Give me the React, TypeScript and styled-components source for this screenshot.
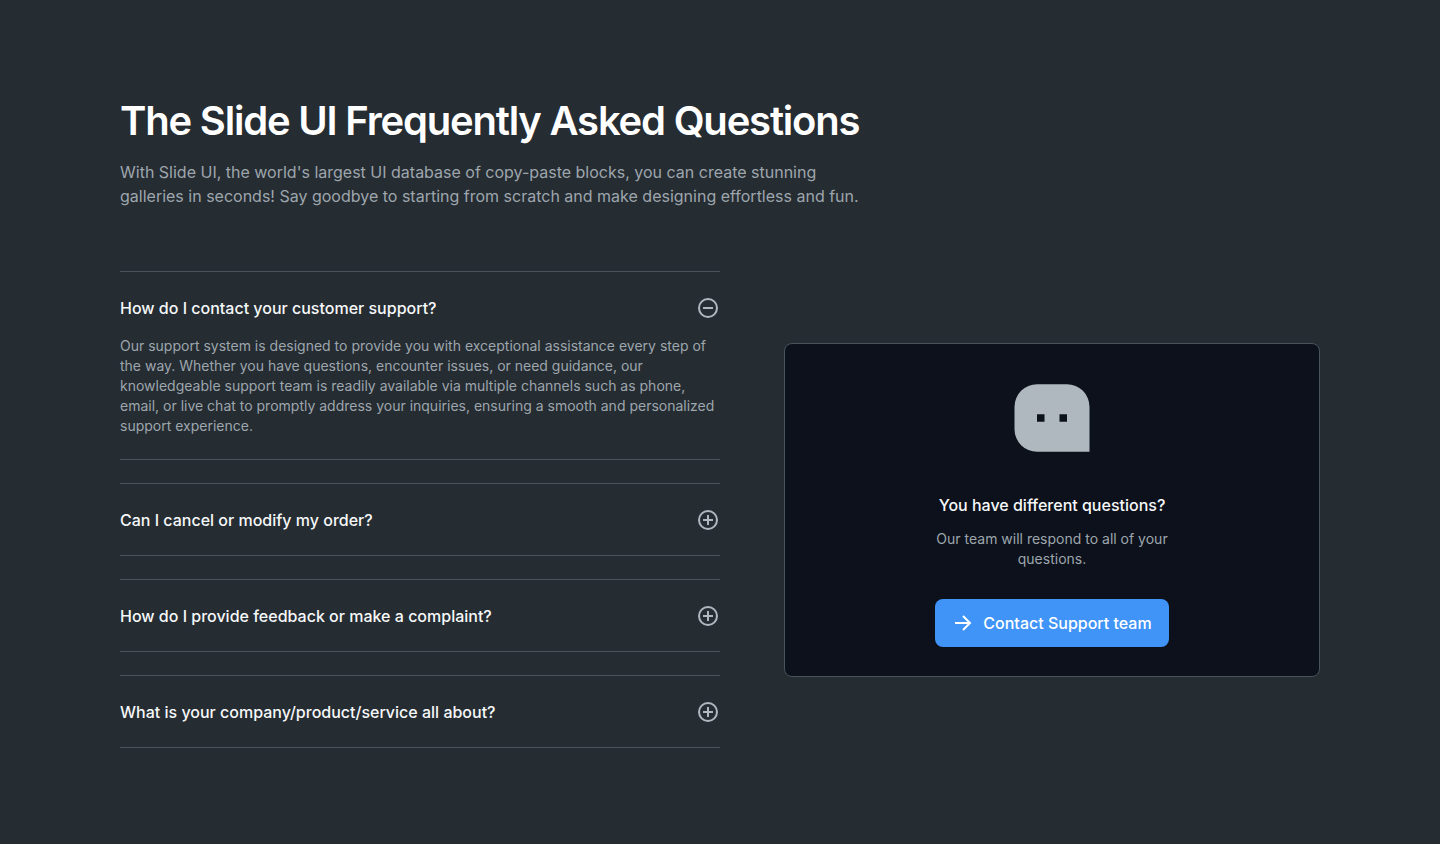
import React, { useState } from "react";
import styled, { createGlobalStyle } from "styled-components";

const color = {
  page: "#252c32",
  card: "#0c111b",
  line: "#48535b",
  text: "#f6f8f9",
  muted: "#9ea6ad",
  icon: "#b0b8bf",
  primary: "#4094f7",
};

const GlobalStyle = createGlobalStyle`
  *, *::before, *::after { box-sizing: border-box; }
  body {
    margin: 0;
    background: ${color.page};
    font-family: Inter, "Liberation Sans", sans-serif;
    -webkit-font-smoothing: antialiased;
  }
  h1, h2, h3, p { margin: 0; }
`;

const Section = styled.main`
  max-width: 1440px;
  margin: 0 auto;
  padding: 96px 120px;

  @media (max-width: 900px) {
    padding: 48px 24px;
  }
`;

const Header = styled.header`
  display: flex;
  flex-direction: column;
  gap: 15px;
  max-width: 760px;
  margin-bottom: 63px;
`;

const Title = styled.h1`
  color: #fff;
  font-size: 40px;
  line-height: 49px;
  font-weight: 600;
  letter-spacing: -0.03em;
`;

const Intro = styled.p`
  color: ${color.muted};
  font-size: 16px;
  line-height: 24px;
`;

const Content = styled.div`
  display: grid;
  grid-template-columns: minmax(0, 600fr) minmax(0, 536fr);
  gap: 64px;
  align-items: center;

  @media (max-width: 900px) {
    grid-template-columns: minmax(0, 1fr);
  }
`;

const Questions = styled.div`
  display: flex;
  flex-direction: column;
  gap: 23px;
`;

const Item = styled.section`
  border-top: 1px solid ${color.line};
  border-bottom: 1px solid ${color.line};
  padding: 24px 0 23px;
`;

const Question = styled.button`
  display: flex;
  align-items: center;
  justify-content: space-between;
  width: 100%;
  padding: 0;
  border: 0;
  background: none;
  color: ${color.text};
  font: 500 16px/24px Inter, "Liberation Sans", sans-serif;
  text-align: left;
  cursor: pointer;
`;

const Answer = styled.p`
  margin-top: 16px;
  color: ${color.muted};
  font-size: 14px;
  line-height: 20px;
`;

const ItemIcon = styled.svg`
  flex: none;
  width: 24px;
  height: 24px;
  color: ${color.icon};
`;

const Card = styled.aside`
  display: flex;
  flex-direction: column;
  align-items: center;
  padding: 40px 24px 29px;
  border: 1px solid ${color.line};
  border-radius: 8px;
  background: ${color.card};
  text-align: center;
`;

const Face = styled.svg`
  width: 76px;
  height: 68px;
  margin-bottom: 41px;
`;

const CardTitle = styled.h2`
  color: ${color.text};
  font-size: 16px;
  line-height: 24px;
  font-weight: 500;
`;

const CardText = styled.p`
  max-width: 240px;
  margin: 12px 0 30px;
  color: ${color.muted};
  font-size: 14px;
  line-height: 20px;
`;

const Contact = styled.button`
  display: flex;
  align-items: center;
  gap: 8px;
  height: 48px;
  padding: 0 17px 0 16px;
  border: 0;
  border-radius: 8px;
  background: ${color.primary};
  color: #fff;
  font: 500 16px/24px Inter, "Liberation Sans", sans-serif;
  cursor: pointer;
`;

const faqs = [
  {
    question: "How do I contact your customer support?",
    answer:
      "Our support system is designed to provide you with exceptional assistance every step of the way. Whether you have questions, encounter issues, or need guidance, our knowledgeable support team is readily available via multiple channels such as phone, email, or live chat to promptly address your inquiries, ensuring a smooth and personalized support experience.",
  },
  {
    question: "Can I cancel or modify my order?",
    answer: "Yes. Contact our support team and we will update or cancel your order.",
  },
  {
    question: "How do I provide feedback or make a complaint?",
    answer: "Send your feedback to our support team and we will reply to you.",
  },
  {
    question: "What is your company/product/service all about?",
    answer: "Slide UI is a database of copy-paste blocks for designers.",
  },
];

function ToggleIcon({ open }: { open: boolean }) {
  return (
    <ItemIcon viewBox="0 0 24 24" fill="none" stroke="currentColor" strokeWidth="2" aria-hidden="true">
      <circle cx="12" cy="12" r="9" />
      <path d={open ? "M7 12h10" : "M7 12h10M12 7v10"} />
    </ItemIcon>
  );
}

export default function App() {
  const [openIndex, setOpenIndex] = useState(0);

  return (
    <>
      <GlobalStyle />
      <Section>
        <Header>
          <Title>The Slide UI Frequently Asked Questions</Title>
          <Intro>
            With Slide UI, the world's largest UI database of copy-paste blocks, you can create stunning
            galleries in seconds! Say goodbye to starting from scratch and make designing effortless and fun.
          </Intro>
        </Header>
        <Content>
          <Questions>
            {faqs.map((faq, i) => (
              <Item key={faq.question}>
                <Question
                  type="button"
                  aria-expanded={openIndex === i}
                  onClick={() => setOpenIndex(openIndex === i ? -1 : i)}
                >
                  {faq.question}
                  <ToggleIcon open={openIndex === i} />
                </Question>
                {openIndex === i && <Answer>{faq.answer}</Answer>}
              </Item>
            ))}
          </Questions>
          <Card>
            <Face viewBox="0 0 76 68" aria-hidden="true">
              <path d="M23 0.25H53A22.5 22.5 0 0 1 75.5 22.75V67.75H23A22.5 22.5 0 0 1 0.5 45.25V22.75A22.5 22.5 0 0 1 23 0.25Z" fill={color.icon} />
              <path d="M23 30.25h7.5v7.5H23zM45.5 30.25H53v7.5h-7.5z" fill={color.card} />
            </Face>
            <CardTitle>You have different questions?</CardTitle>
            <CardText>Our team will respond to all of your questions.</CardText>
            <Contact type="button">
              <svg width="24" height="24" viewBox="0 0 24 24" fill="none" stroke="currentColor" strokeWidth="2" aria-hidden="true">
                <path d="M4 12h15M12 5l7 7-7 7" />
              </svg>
              Contact Support team
            </Contact>
          </Card>
        </Content>
      </Section>
    </>
  );
}
